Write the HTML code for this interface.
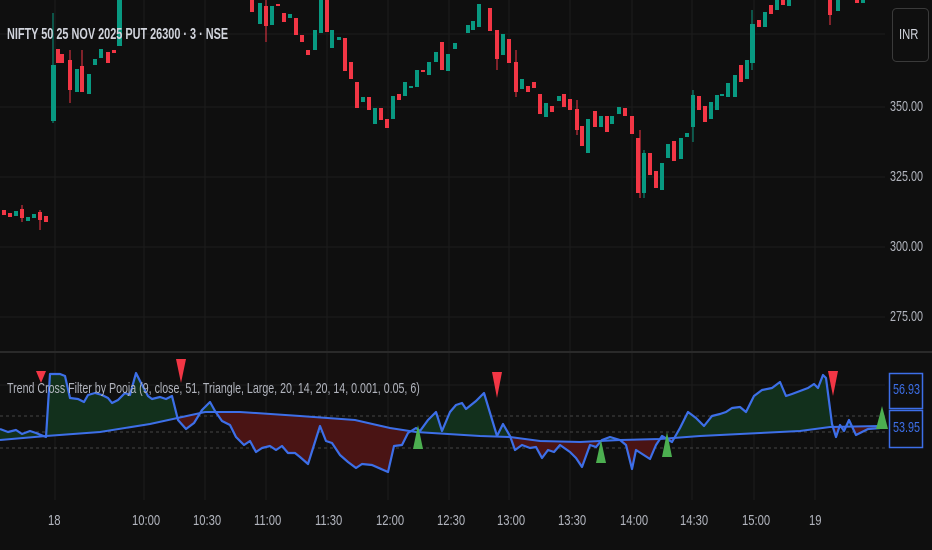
<!DOCTYPE html>
<html><head><meta charset="utf-8"><style>
html,body{margin:0;padding:0;background:#0f0f0f;width:932px;height:550px;overflow:hidden;font-family:"Liberation Sans",sans-serif}
svg{position:absolute;left:0;top:0}
.t{position:absolute;white-space:nowrap;transform-origin:0 50%}
</style></head><body>
<svg width="932" height="550" xmlns="http://www.w3.org/2000/svg">
<defs>
<clipPath id="above"><polygon points="0,350 0,440 46,436 100,432 150,424 205,412 240,412 300,416 355,420 390,428 416,432 480,436 510,437 540,441 580,442 620,440 660,439 700,436 760,433 800,431 830,427 880,426 880,350"/></clipPath>
<clipPath id="below"><polygon points="0,500 0,440 46,436 100,432 150,424 205,412 240,412 300,416 355,420 390,428 416,432 480,436 510,437 540,441 580,442 620,440 660,439 700,436 760,433 800,431 830,427 880,426 880,500"/></clipPath>
</defs>
<g stroke="#1c1c1c" stroke-width="1">
<line x1="0" y1="34" x2="885" y2="34"/><line x1="0" y1="107" x2="885" y2="107"/><line x1="0" y1="177" x2="885" y2="177"/><line x1="0" y1="247" x2="885" y2="247"/><line x1="0" y1="317" x2="885" y2="317"/>
<line x1="0" y1="385" x2="885" y2="385"/>
<line x1="55" y1="0" x2="55" y2="500"/><line x1="144" y1="0" x2="144" y2="500"/><line x1="205" y1="0" x2="205" y2="500"/><line x1="266" y1="0" x2="266" y2="500"/><line x1="327" y1="0" x2="327" y2="500"/><line x1="388" y1="0" x2="388" y2="500"/><line x1="449" y1="0" x2="449" y2="500"/><line x1="509" y1="0" x2="509" y2="500"/><line x1="570" y1="0" x2="570" y2="500"/><line x1="632" y1="0" x2="632" y2="500"/><line x1="692" y1="0" x2="692" y2="500"/><line x1="754" y1="0" x2="754" y2="500"/><line x1="815" y1="0" x2="815" y2="500"/>
</g>
<line x1="0" y1="352" x2="932" y2="352" stroke="#2a2a2a" stroke-width="2"/>
<g stroke="#444" stroke-dasharray="3,3"><line x1="0" y1="416" x2="885" y2="416"/><line x1="0" y1="432" x2="885" y2="432"/><line x1="0" y1="448" x2="885" y2="448"/></g>
<g fill="#f23645">
<rect x="2" y="210" width="4" height="5"/><rect x="8" y="213" width="4" height="4"/><rect x="20" y="209" width="4" height="9"/><rect x="38" y="212" width="4" height="8"/><rect x="44" y="216" width="4" height="6"/>
<rect x="56" y="49" width="4" height="14"/><rect x="60" y="54" width="4" height="9"/><rect x="68" y="60" width="4" height="30"/><rect x="80" y="66" width="4" height="26"/><rect x="106" y="52" width="4" height="11"/><rect x="112" y="50" width="4" height="3"/>
<rect x="250" y="0" width="4" height="12"/><rect x="264" y="6" width="4" height="20"/><rect x="276" y="4" width="4" height="2"/><rect x="282" y="13" width="4" height="9"/><rect x="294" y="18" width="4" height="17"/><rect x="300" y="35" width="4" height="7"/><rect x="306" y="50" width="4" height="5"/><rect x="325" y="0" width="4" height="32"/><rect x="343" y="38" width="4" height="33"/><rect x="349" y="62" width="4" height="17"/><rect x="355" y="82" width="4" height="26"/><rect x="367" y="97" width="4" height="13"/><rect x="379" y="108" width="4" height="12"/><rect x="385" y="119" width="4" height="9"/><rect x="397" y="94" width="4" height="6"/><rect x="421" y="70" width="4" height="2"/><rect x="440" y="42" width="4" height="28"/>
<rect x="488" y="8" width="4" height="23"/><rect x="495" y="30" width="4" height="29"/><rect x="507" y="39" width="4" height="24"/><rect x="514" y="62" width="4" height="30"/><rect x="526" y="86" width="4" height="6"/><rect x="532" y="82" width="4" height="6"/><rect x="538" y="94" width="4" height="20"/><rect x="550" y="106" width="4" height="6"/><rect x="562" y="94" width="4" height="13"/><rect x="568" y="99" width="4" height="11"/><rect x="575" y="109" width="4" height="21"/><rect x="580" y="126" width="4" height="20"/><rect x="593" y="111" width="4" height="16"/><rect x="605" y="116" width="4" height="16"/><rect x="623" y="108" width="4" height="8"/><rect x="630" y="116" width="4" height="18"/><rect x="636" y="138" width="4" height="55"/><rect x="648" y="153" width="4" height="22"/><rect x="654" y="171" width="4" height="17"/><rect x="672" y="141" width="4" height="20"/><rect x="697" y="96" width="4" height="14"/><rect x="703" y="106" width="4" height="16"/><rect x="739" y="65" width="4" height="17"/><rect x="757" y="20" width="4" height="7"/><rect x="769" y="5" width="4" height="9"/><rect x="781" y="0" width="4" height="5"/><rect x="828" y="0" width="4" height="15"/><rect x="855" y="0" width="4" height="3"/>
</g>
<g stroke="#f23645" stroke-width="1"><line x1="22" y1="205" x2="22" y2="222"/><line x1="40" y1="210" x2="40" y2="230"/><line x1="70" y1="50" x2="70" y2="103"/><line x1="82" y1="50" x2="82" y2="92"/><line x1="266" y1="0" x2="266" y2="42"/><line x1="640" y1="130" x2="640" y2="198"/><line x1="577" y1="100" x2="577" y2="135"/><line x1="516" y1="50" x2="516" y2="97"/><line x1="497" y1="30" x2="497" y2="70"/><line x1="830" y1="0" x2="830" y2="25"/></g>
<g fill="#089981">
<rect x="14" y="211" width="4" height="5"/><rect x="26" y="217" width="4" height="4"/><rect x="32" y="214" width="4" height="4"/>
<rect x="51" y="65" width="5" height="56"/><rect x="75" y="69" width="4" height="23"/><rect x="87" y="74" width="4" height="20"/><rect x="93" y="59" width="4" height="6"/><rect x="99" y="49" width="4" height="9"/><rect x="117" y="0" width="5" height="46"/>
<rect x="258" y="3" width="4" height="21"/><rect x="270" y="6" width="4" height="19"/><rect x="288" y="14" width="4" height="4"/><rect x="313" y="30" width="4" height="20"/><rect x="319" y="0" width="4" height="33"/><rect x="330" y="30" width="4" height="18"/><rect x="337" y="37" width="4" height="3"/><rect x="361" y="97" width="4" height="5"/><rect x="373" y="108" width="4" height="16"/><rect x="391" y="96" width="4" height="23"/><rect x="403" y="82" width="4" height="14"/><rect x="409" y="86" width="4" height="2"/><rect x="415" y="70" width="4" height="17"/><rect x="427" y="62" width="4" height="13"/><rect x="434" y="52" width="4" height="10"/><rect x="446" y="54" width="4" height="17"/><rect x="453" y="43" width="4" height="6"/>
<rect x="466" y="25" width="4" height="8"/><rect x="471" y="21" width="4" height="9"/><rect x="477" y="4" width="4" height="23"/><rect x="501" y="34" width="4" height="21"/><rect x="520" y="79" width="4" height="10"/><rect x="544" y="103" width="4" height="14"/><rect x="557" y="96" width="4" height="5"/><rect x="586" y="119" width="4" height="34"/><rect x="599" y="116" width="4" height="11"/><rect x="610" y="116" width="4" height="8"/><rect x="617" y="107" width="4" height="7"/><rect x="642" y="153" width="4" height="40"/><rect x="660" y="163" width="4" height="27"/><rect x="666" y="144" width="4" height="14"/><rect x="679" y="138" width="4" height="21"/><rect x="685" y="133" width="4" height="4"/><rect x="691" y="95" width="4" height="32"/><rect x="709" y="102" width="4" height="17"/><rect x="715" y="95" width="4" height="15"/><rect x="720" y="94" width="4" height="2"/><rect x="726" y="83" width="4" height="14"/><rect x="733" y="75" width="4" height="22"/><rect x="745" y="60" width="4" height="19"/><rect x="750" y="24" width="5" height="39"/><rect x="763" y="12" width="4" height="15"/><rect x="775" y="0" width="4" height="10"/><rect x="787" y="0" width="4" height="6"/><rect x="836" y="0" width="4" height="11"/><rect x="861" y="0" width="4" height="3"/>
</g>
<g stroke="#089981" stroke-width="1"><line x1="53" y1="13" x2="53" y2="123"/><line x1="644" y1="150" x2="644" y2="198"/><line x1="752" y1="10" x2="752" y2="70"/><line x1="693" y1="90" x2="693" y2="142"/></g>
<polygon clip-path="url(#above)" fill="#12301c" points="0,429 8,432 16,430 22,434 30,431 36,433 46,437 50,374 60,374 65,376 70,398 78,399 84,402 88,395 95,393 102,395 108,398 112,403 118,400 125,393 130,395 136,373 140,381 148,396 152,399 160,397 166,399 172,396 178,420 186,429 194,423 202,410 210,402 215,411 222,421 230,425 236,437 244,445 250,441 256,452 262,448 270,446 276,450 282,446 288,453 295,453 300,457 308,464 320,426 326,441 332,443 340,455 348,462 356,468 362,464 372,465 388,472 394,446 402,445 408,433 416,428 420,431 428,420 436,412 442,431 450,412 456,405 462,403 466,409 476,401 484,393 497,436 503,424 510,436 515,450 522,445 530,448 536,447 542,458 548,450 554,452 560,445 570,452 576,458 582,467 590,445 596,447 602,440 610,437 620,440 626,445 632,469 636,450 650,459 656,445 662,436 672,442 680,428 688,412 696,418 704,426 712,416 720,414 726,412 732,408 740,407 746,412 754,396 762,390 772,388 780,382 786,396 792,394 800,391 808,388 814,384 818,388 823,375 826,378 832,424 836,437 840,425 844,431 849,420 856,435 868,429 880,428 880,426 830,427 800,431 760,433 700,436 660,439 620,440 580,442 540,441 510,437 480,436 416,432 390,428 355,420 300,416 240,412 205,412 150,424 100,432 46,436 0,440"/>
<polygon clip-path="url(#below)" fill="#4a1414" points="0,429 8,432 16,430 22,434 30,431 36,433 46,437 50,374 60,374 65,376 70,398 78,399 84,402 88,395 95,393 102,395 108,398 112,403 118,400 125,393 130,395 136,373 140,381 148,396 152,399 160,397 166,399 172,396 178,420 186,429 194,423 202,410 210,402 215,411 222,421 230,425 236,437 244,445 250,441 256,452 262,448 270,446 276,450 282,446 288,453 295,453 300,457 308,464 320,426 326,441 332,443 340,455 348,462 356,468 362,464 372,465 388,472 394,446 402,445 408,433 416,428 420,431 428,420 436,412 442,431 450,412 456,405 462,403 466,409 476,401 484,393 497,436 503,424 510,436 515,450 522,445 530,448 536,447 542,458 548,450 554,452 560,445 570,452 576,458 582,467 590,445 596,447 602,440 610,437 620,440 626,445 632,469 636,450 650,459 656,445 662,436 672,442 680,428 688,412 696,418 704,426 712,416 720,414 726,412 732,408 740,407 746,412 754,396 762,390 772,388 780,382 786,396 792,394 800,391 808,388 814,384 818,388 823,375 826,378 832,424 836,437 840,425 844,431 849,420 856,435 868,429 880,428 880,426 830,427 800,431 760,433 700,436 660,439 620,440 580,442 540,441 510,437 480,436 416,432 390,428 355,420 300,416 240,412 205,412 150,424 100,432 46,436 0,440"/>
<polyline fill="none" stroke="#3d6fe8" stroke-width="2" points="0,440 46,436 100,432 150,424 205,412 240,412 300,416 355,420 390,428 416,432 480,436 510,437 540,441 580,442 620,440 660,439 700,436 760,433 800,431 830,427 880,426"/>
<polyline fill="none" stroke="#3d6fe8" stroke-width="2.2" stroke-linejoin="round" points="0,429 8,432 16,430 22,434 30,431 36,433 46,437 50,374 60,374 65,376 70,398 78,399 84,402 88,395 95,393 102,395 108,398 112,403 118,400 125,393 130,395 136,373 140,381 148,396 152,399 160,397 166,399 172,396 178,420 186,429 194,423 202,410 210,402 215,411 222,421 230,425 236,437 244,445 250,441 256,452 262,448 270,446 276,450 282,446 288,453 295,453 300,457 308,464 320,426 326,441 332,443 340,455 348,462 356,468 362,464 372,465 388,472 394,446 402,445 408,433 416,428 420,431 428,420 436,412 442,431 450,412 456,405 462,403 466,409 476,401 484,393 497,436 503,424 510,436 515,450 522,445 530,448 536,447 542,458 548,450 554,452 560,445 570,452 576,458 582,467 590,445 596,447 602,440 610,437 620,440 626,445 632,469 636,450 650,459 656,445 662,436 672,442 680,428 688,412 696,418 704,426 712,416 720,414 726,412 732,408 740,407 746,412 754,396 762,390 772,388 780,382 786,396 792,394 800,391 808,388 814,384 818,388 823,375 826,378 832,424 836,437 840,425 844,431 849,420 856,435 868,429 880,428"/>
<g fill="#f23645"><polygon points="36,371 46,371 41,383"/><polygon points="176,359 186,359 181,383"/><polygon points="492,372 502,372 497,398"/><polygon points="828,371 838,371 833,396"/></g>
<g fill="#4caf50"><polygon points="413,449 423,449 418,425"/><polygon points="596,463 606,463 601,440"/><polygon points="662,457 672,457 667,432"/><polygon points="876,429 888,429 882,406"/></g>
<rect x="889.5" y="373.5" width="33" height="35" fill="#0f0f0f" stroke="#3d6fe8" stroke-width="1.5"/>
<rect x="889.5" y="410.5" width="33" height="37" fill="#0f0f0f" stroke="#3d6fe8" stroke-width="1.5"/>
<rect x="892.5" y="8.5" width="36" height="53" rx="4" fill="#0f0f0f" stroke="#3a3a3a"/>
</svg>
<div class="t" style="left:7px;top:26px;font-size:16px;font-weight:bold;color:#d1d4dc;transform:scaleX(0.68)">NIFTY 50 25 NOV 2025 PUT 26300 · 3 · NSE</div>
<div class="t" style="left:7px;top:380px;font-size:15px;color:#b2b5be;transform:scaleX(0.71)">Trend Cross Filter by Pooja (9, close, 51, Triangle, Large, 20, 14, 20, 14, 0.001, 0.05, 6)</div>
<div class="t" style="left:899px;top:26px;font-size:15px;color:#d1d4dc;transform:scaleX(0.75)">INR</div>
<div class="t" style="left:890px;top:98px;font-size:15px;color:#b2b5be;transform:scaleX(0.72)">350.00</div>
<div class="t" style="left:890px;top:168px;font-size:15px;color:#b2b5be;transform:scaleX(0.72)">325.00</div>
<div class="t" style="left:890px;top:238px;font-size:15px;color:#b2b5be;transform:scaleX(0.72)">300.00</div>
<div class="t" style="left:890px;top:308px;font-size:15px;color:#b2b5be;transform:scaleX(0.72)">275.00</div>
<div class="t" style="left:893px;top:381px;font-size:15px;color:#3d6fe8;transform:scaleX(0.72)">56.93</div>
<div class="t" style="left:893px;top:419px;font-size:15px;color:#3d6fe8;transform:scaleX(0.72)">53.95</div>
<div style="position:absolute;top:512px;left:0;width:932px;height:18px;font-size:15px;color:#b2b5be">
<span class="t" style="left:48px;transform:scaleX(0.75)">18</span>
<span class="t" style="left:132px;transform:scaleX(0.75)">10:00</span>
<span class="t" style="left:193px;transform:scaleX(0.75)">10:30</span>
<span class="t" style="left:254px;transform:scaleX(0.75)">11:00</span>
<span class="t" style="left:315px;transform:scaleX(0.75)">11:30</span>
<span class="t" style="left:376px;transform:scaleX(0.75)">12:00</span>
<span class="t" style="left:437px;transform:scaleX(0.75)">12:30</span>
<span class="t" style="left:497px;transform:scaleX(0.75)">13:00</span>
<span class="t" style="left:558px;transform:scaleX(0.75)">13:30</span>
<span class="t" style="left:620px;transform:scaleX(0.75)">14:00</span>
<span class="t" style="left:680px;transform:scaleX(0.75)">14:30</span>
<span class="t" style="left:742px;transform:scaleX(0.75)">15:00</span>
<span class="t" style="left:809px;transform:scaleX(0.75)">19</span>
</div>
</body></html>
